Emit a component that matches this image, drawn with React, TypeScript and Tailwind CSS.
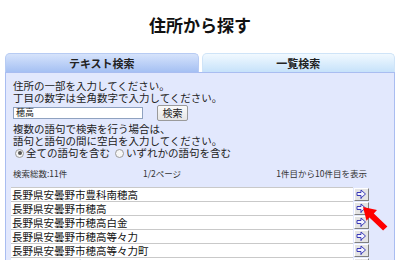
const rows = [
  "長野県安曇野市豊科南穂高",
  "長野県安曇野市穂高",
  "長野県安曇野市穂高白金",
  "長野県安曇野市穂高等々力",
  "長野県安曇野市穂高等々力町",
  "長野県安曇野市穂高有明",
];

function ArrowButton() {
  return (
    <div className="w-[15px] h-[13px] ml-[1px] flex items-center justify-center bg-[#e4e4e4] border border-t-white border-l-white border-r-[#808080] border-b-[#808080]">
      <svg width="11" height="11" viewBox="0 0 11 11">
        <polygon points="1,3.5 5,3.5 5,1 9.5,5 5,9 5,6.5 1,6.5" fill="#f4f4ff" stroke="#3a3ab8" strokeWidth="1" />
        <line x1="5" y1="9" x2="5" y2="11" stroke="#3a3ab8" strokeDasharray="1 1" />
      </svg>
    </div>
  );
}

function Radio({ checked }: { checked?: boolean }) {
  return (
    <span className="inline-flex w-[9px] h-[9px] rounded-full border border-[#9a9a9a] bg-[#f6f6f6] items-center justify-center mr-[2px]">
      {checked && <span className="w-[4px] h-[4px] rounded-full bg-[#555]" />}
    </span>
  );
}

export default function App() {
  return (
    <div
      className="relative w-[400px] h-[260px] overflow-hidden bg-white text-[#222]"
      style={{ fontFamily: '"Noto Sans CJK JP", "Noto Sans", sans-serif' }}
    >
      {/* title */}
      <h1 className="pt-[14px] h-[53px] text-center text-[17px] leading-[22px] font-bold text-[#111]">住所から探す</h1>

      {/* tabs */}
      <div className="flex gap-[3px] px-[5px] h-[19px]">
        <div className="flex-1 rounded-t-[5px] border border-b-0 border-[#b7cbf3] bg-gradient-to-b from-[#d6e3fb] to-[#a5c0f3] flex items-center justify-center text-[11px] font-semibold leading-none">
          テキスト検索
        </div>
        <div className="flex-1 rounded-t-[5px] border border-b-0 border-[#cfe4f8] bg-gradient-to-b from-[#f1f9ff] to-[#c6e2fa] flex items-center justify-center text-[11px] font-semibold leading-none">
          一覧検索
        </div>
      </div>

      {/* panel */}
      <div className="mx-[5px] h-[200px] border border-[#a9bdf1] bg-[#e2e8fd] px-[7px] pt-[7px] text-[10.5px] leading-[12px]">
        <p>住所の一部を入力してください。</p>
        <p>丁目の数字は全角数字で入力してください。</p>

        <div className="flex items-center h-[16px] mt-[1px]">
          <div className="w-[130px] h-[12px] bg-white border border-[#8fa2c0] text-[9px] leading-[10px] pl-[2px]">穂高</div>
          <button className="ml-[14px] w-[31px] h-[16px] rounded-[2px] border border-[#9a9a9a] bg-gradient-to-b from-[#fafafa] to-[#e6e6e6] text-[10px] leading-none">
            検索
          </button>
        </div>

        <p className="mt-[2px]">複数の語句で検索を行う場合は、</p>
        <p>語句と語句の間に空白を入力してください。</p>
        <div className="flex items-center h-[12px] pl-[2px]">
          <Radio checked />
          <span>全ての語句を含む</span>
          <span className="w-[5px]" />
          <Radio />
          <span>いずれかの語句を含む</span>
        </div>

        <div className="flex items-center w-[354px] h-[12px] mt-[8px] text-[8.5px] text-[#333]">
          <span className="w-[130px]">検索総数:11件</span>
          <span>1/2ページ</span>
          <span className="ml-auto">1件目から10件目を表示</span>
        </div>

        <div className="-ml-[2px] w-[358px] mt-[8px]">
          {rows.map((r) => (
            <div key={r} className="flex items-center h-[14px]">
              <div className="flex-1 h-[14px] bg-white border-t border-[#c9c9c9] text-[10.5px] leading-[13px] pl-[1px] text-[#111] whitespace-nowrap">
                {r}
              </div>
              <ArrowButton />
            </div>
          ))}
        </div>
      </div>

      {/* red pointer */}
      <svg className="absolute left-[358px] top-[200px]" width="32" height="34" viewBox="0 0 32 34">
        <polygon
          points="5,7 19,10 15.8,13.4 29.4,26.5 25.1,30.6 11.4,17.6 8.5,20.8"
          fill="#ff0000"
        />
      </svg>
    </div>
  );
}
